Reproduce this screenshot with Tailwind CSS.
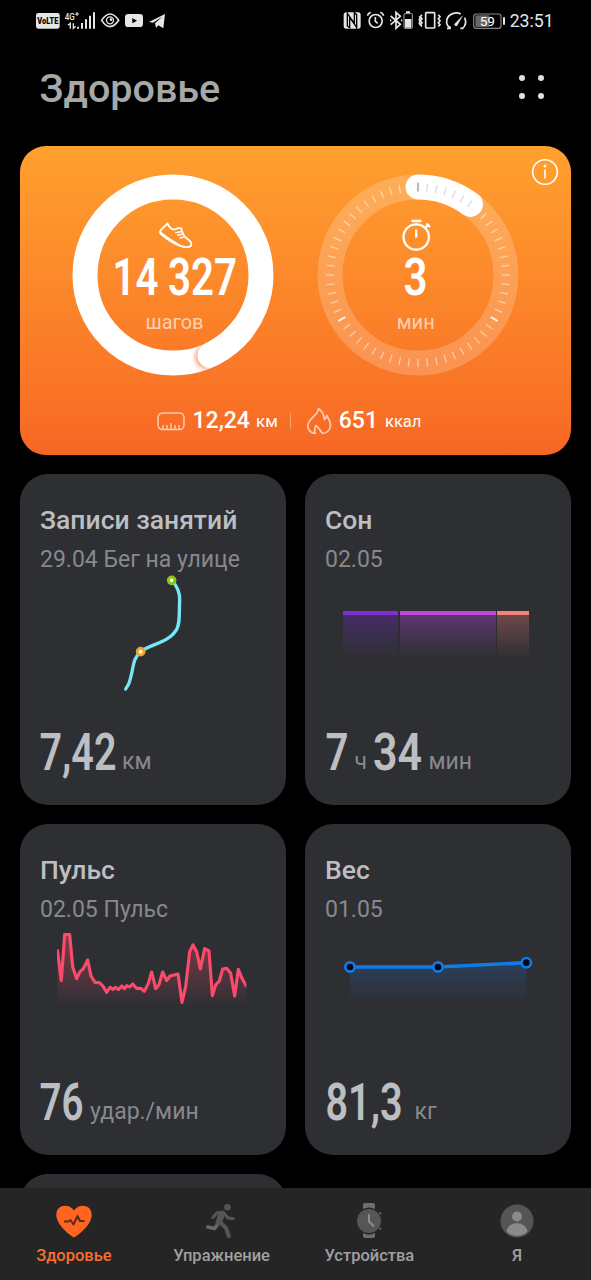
<!DOCTYPE html>
<html lang="ru">
<head>
  <meta charset="UTF-8">
  <meta name="viewport" content="width=device-width, initial-scale=1.0">
  <title>Здоровье</title>
  <script src="https://cdn.jsdelivr.net/npm/@tailwindcss/browser@4"></script>
</head>
<body class="bg-black font-['Roboto',sans-serif]">
  <div class="flex h-[1280px] w-[591px] flex-col overflow-hidden">

    <!-- Status bar -->
    <div class="flex h-10 shrink-0 items-start justify-between pt-[10px] pr-[37px] pl-[35px]">
      <svg class="h-5 w-[132px] overflow-visible" viewBox="105 30 396 60" fill="#e6e6e6">
        <rect x="108" y="39" width="71" height="47" rx="7" />
        <text x="112" y="73" font-size="29" font-weight="900" fill="#000" textLength="63" lengthAdjust="spacingAndGlyphs">VoLTE</text>
        <text x="194" y="59" font-size="29" font-weight="500" textLength="30" lengthAdjust="spacingAndGlyphs">4G</text>
        <path d="M225 42h12M231 36v12" stroke="#e6e6e6" stroke-width="3" />
        <path d="M211 86V70l-7 6M220 70v15l7-6" fill="none" stroke="#e6e6e6" stroke-width="4" />
        <path d="M231 80h6v6h-6zM243 69h6v17h-6zM255 58h6v28h-6zM267 47h6v39h-6zM279 37h6v49h-6z" />
        <path d="M305 61q25-38 51 0q-26 38-51 0z" fill="none" stroke="#e6e6e6" stroke-width="5" />
        <circle cx="330" cy="61" r="10.500" fill="none" stroke="#e6e6e6" stroke-width="4" />
        <circle cx="333" cy="59" r="4" />
        <rect x="375" y="42" width="54" height="39" rx="10" />
        <path d="M397 54v16l14-8z" fill="#000" />
        <path d="M447 66l48-24-5 43-15-9-7 8-3-14 22-20-28 18z" />
      </svg>
      <svg class="h-5 w-[211px] overflow-visible" viewBox="139 30 633 60" fill="none" stroke="#e6e6e6" stroke-width="4">
        <rect x="141" y="37" width="51" height="49" rx="8" fill="#e6e6e6" stroke="none" />
        <path d="M152 37v41l7 5V52l21 30M180 86V44l-7-6v32l-21-30" stroke="#000" stroke-width="4" />
        <circle cx="237" cy="63" r="19.500" stroke-width="5" />
        <path d="M236 51v13l7 6M212 47q3-7 10-10M251 37q8 3 10 10" stroke-width="5" />
        <path d="M282 48l29 25-13 12V37l13 12-29 25M280 61h4M313 61h4" stroke-width="5" />
        <rect x="322" y="41" width="25" height="44" rx="2" stroke-width="3" stroke="#aaa" />
        <path d="M325 57h19v26h-19zM328 34h12v5h-12z" fill="#e6e6e6" stroke="none" />
        <rect x="387" y="38" width="27" height="46" rx="2" stroke-width="5" />
        <path d="M376 44l-5 6 5 6-5 6 5 6-5 6 5 5M368 49l2 5-2 5 2 5-2 5 2 5M425 44l5 6-5 6 5 6-5 6 5 6-5 5" stroke-width="5" />
        <path d="M462 85C443 74 447 47 470 40q13-4 22 2M504 53q8 20-6 32h-7M460 79v6h-9" stroke-width="5" />
        <path d="M498 47l-25 26a6 6 0 0 0 8 4z" fill="#e6e6e6" stroke-width="1" />
        <rect x="531" y="42" width="82" height="43" rx="8" stroke="#888" stroke-width="3.500" />
        <rect x="536" y="46" width="43" height="35" rx="4" fill="#666" stroke="none" />
        <path d="M622 52v22" stroke-width="6" />
        <text x="549" y="77" font-size="38" fill="#fff" stroke="none" textLength="46" lengthAdjust="spacingAndGlyphs">59</text>
        <text x="639" y="82" font-size="56" fill="#e6e6e6" stroke="none" textLength="132" lengthAdjust="spacingAndGlyphs">23:51</text>
      </svg>
    </div>

    <!-- Header -->
    <header class="flex h-[106px] shrink-0 items-start justify-between pt-[25px] pr-[47px] pl-[39.500px]">
      <h1 class="text-[39.500px] leading-[48px] font-medium text-[#a8a8a8]">Здоровье</h1>
      <div class="mt-[9.500px] grid grid-cols-2 gap-x-[13px] gap-y-3">
        <span class="size-[6px] rounded-full bg-[#e0e0e0]"></span>
        <span class="size-[6px] rounded-full bg-[#e0e0e0]"></span>
        <span class="size-[6px] rounded-full bg-[#e0e0e0]"></span>
        <span class="size-[6px] rounded-full bg-[#e0e0e0]"></span>
      </div>
    </header>

    <!-- Activity card -->
    <section class="relative mx-5 h-[308.500px] shrink-0 rounded-[26px] bg-linear-to-b from-[#ffa02f] to-[#f76724] pt-7">
      <div class="flex gap-[43.500px] pl-[51.500px]">
        <svg class="size-[202px]" viewBox="-101 -101 202 202">
          <defs>
            <filter id="soft" x="-50%" y="-50%" width="200%" height="200%"><feGaussianBlur stdDeviation="2.200" /></filter>
            <clipPath id="band"><path clip-rule="evenodd" d="M-100.500 0a100.500 100.500 0 1 0 201 0a100.500 100.500 0 1 0-201 0zM-75.500 0a75.500 75.500 0 1 1 151 0a75.500 75.500 0 1 1-151 0z" /></clipPath>
          </defs>
          <circle r="88" fill="none" stroke="#fff" stroke-width="25" />
          <g clip-path="url(#band)">
            <circle cx="34" cy="82" r="12" fill="#f58a5c" opacity=".75" filter="url(#soft)" />
            <circle cx="37" cy="80.500" r="12.500" fill="#fff" />
            <path d="M37 80.500A88.500 88.500 0 0 0 70 54" fill="none" stroke="#fff" stroke-width="26" />
          </g>
          <!-- shoe -->
          <g transform="translate(-67.500 -65) scale(.3333)" fill="none" stroke="#fff" stroke-width="5.500" stroke-linejoin="round" stroke-linecap="round">
            <path d="M186 40C180 50 168 53 163 66C180 80 205 96 224 107C236 113 252 112 256 108C259 102 258 96 250 90L240 82C232 76 230 66 227 55C217 52 213 56 208 59C196 58 190 50 186 40z" />
            <path d="M164 71C184 88 206 102 226 109M211 68l14-3M217 76l12-3M224 84l9-2" stroke-width="4.500" />
          </g>
          <text x="-60.500" y="20" font-size="51" font-weight="600" fill="#fff" textLength="46" lengthAdjust="spacingAndGlyphs">14</text>
          <text x="-5" y="20" font-size="51" font-weight="600" fill="#fff" textLength="69" lengthAdjust="spacingAndGlyphs">327</text>
          <text x="1.500" y="54" font-size="20" fill="#fff" fill-opacity=".65" text-anchor="middle">шагов</text>
        </svg>

        <svg class="size-[202px]" viewBox="-101 -101 202 202">
          <circle r="88" fill="none" stroke="#fff" stroke-opacity=".2" stroke-width="25" />
          <g id="ticks" stroke="#fff" stroke-opacity=".5" stroke-width="1.300"></g>
          <path d="M0-88A88 88 0 0 1 52.500-70.600" fill="none" stroke="#fff" stroke-width="25" stroke-linecap="round" />
          <g id="done-ticks" stroke="#e2dcea" stroke-width="1.500"></g>
          <path d="M0-92.500v9" stroke="#cbb6b0" stroke-width="2.200" />
          <!-- stopwatch -->
          <g fill="none" stroke="#fff" stroke-width="2.300">
            <circle cx="-1.800" cy="-38" r="12.700" />
            <path d="M-6.500-54h10M-1.800-45.500v8M7.500-47.500l3-3M8.500-51.500l3.500 3.500" />
          </g>
          <text x="-14.500" y="20" font-size="51" font-weight="600" fill="#fff" textLength="24" lengthAdjust="spacingAndGlyphs">3</text>
          <text x="-2.300" y="54" font-size="20" fill="#fff" fill-opacity=".65" text-anchor="middle">мин</text>
        </svg>
      </div>

      <div class="mt-[29px] flex h-8 items-center pl-[136.500px] text-white">
        <svg class="mr-2 h-[19px] w-7" viewBox="0 0 28 19" fill="none" stroke="#fff" stroke-opacity=".65" stroke-width="1.500">
          <rect x="1" y="1" width="26" height="16.500" rx="4.500" />
          <path d="M6 17v-4M10 17v-4M14 17v-6M18 17v-4M22 17v-4" />
        </svg>
        <span class="text-[23px] font-medium">12,24</span>
        <span class="mt-[2px] ml-[6px] text-[17px]">км</span>
        <span class="mx-[12.500px] h-4 w-px bg-white/35"></span>
        <svg class="ml-[2px] h-7 w-[26px]" viewBox="0 0 26 28" fill="none" stroke="#fff" stroke-opacity=".65" stroke-width="1.700" stroke-linejoin="round">
          <path d="M12.500 1.500C13 8 2 11 1.800 18.500C1.800 23 5 26.500 9.300 26.500C7.500 24 9 21.500 9.800 18.500C13 20.500 14 23.500 16.500 26.500C21.500 26 24.500 22.500 24.500 18C24.500 14.500 22.500 12 21 8.500C20.500 10.500 20 11.500 18.500 12.500C18 8.500 16 4 12.500 1.500z" />
        </svg>
        <span class="ml-[7px] text-[23px] font-medium">651</span>
        <span class="mt-[2px] ml-[7px] text-[16.500px]">ккал</span>
      </div>

      <svg class="absolute top-[12px] right-[12px] size-7" viewBox="0 0 28 28" fill="none" stroke="#fff" stroke-width="1.600">
        <circle cx="14" cy="14" r="12.300" />
        <path d="M14 11.500v9" />
        <circle cx="14" cy="8" r="1.500" fill="#fff" stroke="none" />
      </svg>
    </section>

    <!-- Cards -->
    <main class="mx-5 mt-[19.500px] grid h-[714px] shrink-0 grid-cols-2 grid-rows-[330.500px_330.500px_330.500px] gap-x-[19px] gap-y-[19.500px] overflow-hidden">
      <section class="flex flex-col rounded-[28px] bg-[#2e2f33] px-5 pt-[30px]">
        <h2 class="text-[26.500px] leading-8 font-medium whitespace-nowrap text-[#bdbec2]">Записи занятий</h2>
        <p class="mt-[10px] text-[23px] leading-7 whitespace-nowrap text-[#88898d]">29.04 Бег на улице</p>
        <svg class="-mt-[2px] h-[140px] w-[226px]" viewBox="60 306 678 420" fill="none">
          <path d="M455 331C475 352 480 370 479 390C477 440 480 460 470 478C445 520 390 522 362 545C335 567 342 600 326 642L317 657" stroke="#76e8f5" stroke-width="10" stroke-linecap="round" />
          <circle cx="455" cy="331" r="10" fill="#fff" stroke="#8cc718" stroke-width="9" />
          <circle cx="362" cy="545" r="10" fill="#fff" stroke="#f0a52c" stroke-width="9" />
        </svg>
        <svg class="mt-[8px] h-[64px] w-[226px]" viewBox="0 0 226 64">
          <text x="-.5" y="50" font-size="51.500" font-weight="600" fill="#bdbec2" textLength="77" lengthAdjust="spacingAndGlyphs">7,42</text>
          <text x="82" y="49" font-size="23" fill="#88898d">км</text>
        </svg>
      </section>

      <section class="flex flex-col rounded-[28px] bg-[#2e2f33] px-5 pt-[30px]">
        <h2 class="text-[26.500px] leading-8 font-medium text-[#bdbec2]">Сон</h2>
        <p class="mt-[10px] text-[23px] leading-7 text-[#88898d]">02.05</p>
        <div class="mt-[37px] mb-[54px] ml-[18px] flex h-[47px] w-[186px]">
          <div class="mr-[2px] w-[55px] border-t-[4px] border-[#7f2ed0] bg-linear-to-b from-[#472b66] to-[#2e2f33]"></div>
          <div class="mr-px w-[96px] border-t-[4px] border-[#bd4ad6] bg-linear-to-b from-[#5c366e] to-[#2e2f33]"></div>
          <div class="w-[32px] border-t-[4px] border-[#f5837d] bg-linear-to-b from-[#6e484b] to-[#2e2f33]"></div>
        </div>
        <svg class="mt-[8px] h-[64px] w-[226px]" viewBox="0 0 226 64">
          <text x=".5" y="50" font-size="51.500" font-weight="600" fill="#bdbec2" textLength="23" lengthAdjust="spacingAndGlyphs">7</text>
          <text x="29.500" y="49" font-size="23" fill="#88898d">ч</text>
          <text x="48" y="50" font-size="51.500" font-weight="600" fill="#bdbec2" textLength="49" lengthAdjust="spacingAndGlyphs">34</text>
          <text x="103.500" y="49" font-size="23" fill="#88898d">мин</text>
        </svg>
      </section>

      <section class="flex flex-col rounded-[28px] bg-[#2e2f33] px-5 pt-[30px]">
        <h2 class="text-[26.500px] leading-8 font-medium text-[#bdbec2]">Пульс</h2>
        <p class="mt-[10px] text-[23px] leading-7 text-[#88898d]">02.05 Пульс</p>
        <svg class="-mt-[2px] h-[140px] w-[226px]" viewBox="60 306 678 420" fill="none">
          <defs>
            <linearGradient id="pulse" gradientUnits="userSpaceOnUse" x1="0" y1="340" x2="0" y2="560">
              <stop stop-color="#ff4d6d" stop-opacity=".4" />
              <stop offset="1" stop-color="#ff4d6d" stop-opacity="0" />
            </linearGradient>
            <clipPath id="pulse-clip"><rect x="111" y="330" width="568" height="240" /></clipPath>
          </defs>
          <g clip-path="url(#pulse-clip)">
            <path id="pulse-area" fill="url(#pulse)" />
            <path id="pulse-line" stroke="#fb4a6b" stroke-width="9.500" stroke-linejoin="round" />
          </g>
        </svg>
        <svg class="mt-[8px] h-[64px] w-[226px]" viewBox="0 0 226 64">
          <text x="-.5" y="50" font-size="51.500" font-weight="600" fill="#bdbec2" textLength="44" lengthAdjust="spacingAndGlyphs">76</text>
          <text x="50" y="49" font-size="23" fill="#88898d">удар./мин</text>
        </svg>
      </section>

      <section class="flex flex-col rounded-[28px] bg-[#2e2f33] px-5 pt-[30px]">
        <h2 class="text-[26.500px] leading-8 font-medium text-[#bdbec2]">Вес</h2>
        <p class="mt-[10px] text-[23px] leading-7 text-[#88898d]">01.05</p>
        <svg class="-mt-[2px] h-[140px] w-[226px]" viewBox="75 306 678 420" fill="none">
          <defs>
            <linearGradient id="weight" x1="0" y1="0" x2="0" y2="1">
              <stop stop-color="#1a80ea" stop-opacity=".2" />
              <stop offset="1" stop-color="#1a80ea" stop-opacity=".04" />
            </linearGradient>
          </defs>
          <path d="M150 441H414L679 428V532H150z" fill="url(#weight)" />
          <path d="M150 441H414L679 428" stroke="#117ae6" stroke-width="11" />
          <g fill="#030814" stroke="#117ae6" stroke-width="8">
            <circle cx="150" cy="441" r="14" />
            <circle cx="414" cy="441" r="14" />
            <circle cx="679" cy="428" r="14" />
          </g>
        </svg>
        <svg class="mt-[8px] h-[64px] w-[226px]" viewBox="0 0 226 64">
          <text x=".5" y="50" font-size="51.500" font-weight="600" fill="#bdbec2" textLength="77" lengthAdjust="spacingAndGlyphs">81,3</text>
          <text x="89.500" y="49" font-size="23" fill="#88898d">кг</text>
        </svg>
      </section>

      <section class="rounded-[28px] bg-[#2e2f33]"></section>
    </main>

    <!-- Bottom tabs -->
    <nav class="grid h-[92px] shrink-0 grid-cols-4 bg-[#252525] text-[16.500px] font-medium text-[#a0a0a0]">
      <a href="#" class="flex flex-col items-center pt-[14px] text-[#f8702e]">
        <svg class="h-9 w-9" viewBox="0 0 36 36">
          <path d="M18 35.500C15 34 .3 23.500.3 12.800C.3 6.500 4.500 3.700 9 3.700C13 3.700 16 5.700 18 8.500C20 5.700 23 3.700 27 3.700C31.500 3.700 35.700 6.500 35.700 12.800C35.700 23.500 21 34 18 35.500z" fill="#ff6420" />
          <path d="M8 19.500h4.500l2-1.500 3 4.500 4-8.500 2.500 5h4.500" fill="none" stroke="#5c2c18" stroke-width="2" stroke-linejoin="round" />
        </svg>
        <span class="mt-[6px] leading-6">Здоровье</span>
      </a>
      <a href="#" class="flex flex-col items-center pt-[14px]">
        <svg class="h-9 w-9" viewBox="0 0 36 36" fill="none" stroke="#555" stroke-linecap="round" stroke-linejoin="round">
          <path d="M14 21.500L10.700 26.500L3.800 25" stroke="#686868" stroke-width="3.600" />
          <circle cx="23.400" cy="5.300" r="3.300" fill="#555" stroke="none" />
          <path d="M17.700 12L14.800 20.300" stroke-width="6.500" />
          <path d="M19 10.300L13 10.700L8.800 15.500M20.500 11.300L23.500 15.800L29.300 16.800" stroke-width="3" />
          <path d="M16.400 20.500L22 26L24.800 34" stroke-width="4" />
        </svg>
        <span class="mt-[6px] leading-6">Упражнение</span>
      </a>
      <a href="#" class="flex flex-col items-center pt-[14px]">
        <svg class="h-9 w-9" viewBox="0 0 36 36">
          <path d="M12 7V3q0-2 2-2h8q2 0 2 2v4q-6-3-12 0zM12 31v3q0 2 2 2h8q2 0 2-2v-3q-6 3-12 0z" fill="#6e6e6e" />
          <circle cx="18" cy="19" r="12" fill="#565656" />
          <path d="M18 13v6.500l4.500 4.500" fill="none" stroke="#8e8e8e" stroke-width="2" stroke-linecap="round" />
          <path d="M28.500 10.500l1.500 1.500M28.500 27.500l1.500-1.500" stroke="#777" stroke-width="1.500" />
        </svg>
        <span class="mt-[6px] leading-6">Устройства</span>
      </a>
      <a href="#" class="flex flex-col items-center pt-[14px]">
        <svg class="h-9 w-9" viewBox="0 0 36 36">
          <clipPath id="avatar"><circle cx="18" cy="19" r="15" /></clipPath>
          <circle cx="18" cy="19" r="16.500" fill="#555" />
          <circle cx="18" cy="14.500" r="5" fill="#8a8a8a" />
          <ellipse cx="18" cy="30" rx="10.500" ry="9" fill="#8a8a8a" clip-path="url(#avatar)" />
        </svg>
        <span class="mt-[6px] leading-6">Я</span>
      </a>
    </nav>
  </div>

  <script>
    // Dial ticks: one per minute, brighter at 20 and 40
    let ticks = '';
    let doneTicks = '';
    for (let i = 1; i < 60; i++) {
      const angle = i * 6;
      const line = `<path d="M0-92v8" transform="rotate(${angle})" />`;
      if (i <= 6) {
        doneTicks += line;
      } else if (i % 20 === 0) {
        ticks += `<path d="M0-92v8" stroke-opacity=".95" stroke-width="2" transform="rotate(${angle})" />`;
      } else {
        ticks += line;
      }
    }
    document.getElementById('ticks').innerHTML = ticks;
    document.getElementById('done-ticks').innerHTML = doneTicks;

    // Heart rate samples
    const pulse = '112,388 124,482 134,344 149,344 158,440 170,476 180,455 190,446 203,420 213,468 225,487 238,488 248,497 260,517 270,502 278,508 287,502 295,509 305,498 313,506 320,497 329,501 338,492 350,505 362,505 373,514 385,490 395,456 407,506 417,494 428,456 440,482 450,468 474,462 486,547 497,500 509,395 519,375 530,395 541,447 554,386 567,393 577,527 587,495 598,483 608,447 620,445 632,460 644,528 655,448 666,475 680,500';
    document.getElementById('pulse-line').setAttribute('d', 'M' + pulse);
    document.getElementById('pulse-area').setAttribute('d', 'M' + pulse + ' 680,560 112,560z');
  </script>
</body>
</html>
